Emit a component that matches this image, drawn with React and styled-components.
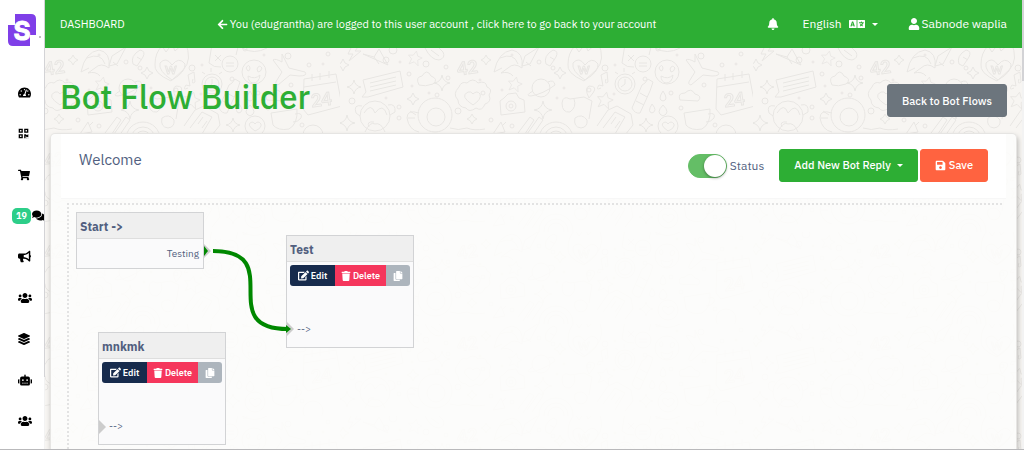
import React, { useState } from "react";
import styled, { createGlobalStyle } from "styled-components";
import {
  FaArrowLeft,
  FaBell,
  FaBullhorn,
  FaComments,
  FaCopy,
  FaEdit,
  FaLanguage,
  FaLayerGroup,
  FaQrcode,
  FaRobot,
  FaSave,
  FaShoppingCart,
  FaTachometerAlt,
  FaTrash,
  FaUser,
  FaUsers,
} from "react-icons/fa";

// ---------------------- wallpaper ----------------------

const star = (x, y, r) =>
  `<path d="M0 -9L3 -3L9 -2L4 2L6 9L0 5L-6 9L-4 2L-9 -2L-3 -3Z" transform="translate(${x} ${y}) rotate(12) scale(${r / 9})"/>`;
const spark = (x, y, r) =>
  `<path d="M${x} ${y - r}Q${x + 1} ${y - 1} ${x + r} ${y}Q${x + 1} ${y + 1} ${x} ${y + r}Q${x - 1} ${y + 1} ${x - r} ${y}Q${x - 1} ${y - 1} ${x} ${y - r}Z"/>`;
const ring = (x, y, r) => `<circle cx="${x}" cy="${y}" r="${r}"/>`;

const doodles = [
  `<path d="M11 0l-3 6h5l-4 7 12-10h-6l3-4"/>`,
  `<path d="M23 6l25 11-9-16-5 8zM34 9l5 7"/>`,
  star(75, 10, 7),
  `<path d="M85 0q6 12 14 12q7-2 4-8l-6-6M91 2l8 6"/>`,
  `<text x="117" y="26" font-size="18" font-family="Lato" font-weight="700" transform="rotate(-8 128 20)">42</text>`,
  spark(146, 12, 5),
  `<path d="M154 24q4-20 18-22q12 2 10 18q-8-6-14 0l-7 5q8-2 12 3M160 10q14-6 18 6M154 24l8-4"/>`,
  `<path d="M182 18l3-10 14-9-9 17zM186 14l5 4"/>`,
  `<path d="M206 16q-3-8 7-14q6 1 3 7l-6 9zM210 9l5 3"/>`,
  spark(220, 25, 6),
  `<path d="M228 16q0-11 7-18l4 6 6-8 3 7 10-9q8 18-2 28l-12 11q-18-8-16-17zM245 17q-6-9-12-2q-2 8 12 17q14-8 13-16q-6-8-13 1"/>`,
  `<text x="238" y="26" font-size="11" font-family="Lato" font-weight="700">W</text>`,
  `<path d="M285-4l-3 19q5 5 12 4M286-3l26-2l-3 12M288 7l6 6m0-6l-6 6"/>`,
  ring(303, 16, 8),
  `<path d="M299 15h8m-8 3h8"/>`,
  `<path d="M315 0q12 7 25 0"/>`,
  ring(327, 24, 12),
  `<path d="M319 20q3-5 4 0q0 3-2 3zM330 21q2-5 5-1q-1 4-4 4zM321 28q7 4 12-1q-1 8-7 8q-5-1-5-7z"/>`,
  `<path d="M355 6l7 14 16 4q3 4-6 4l-9-1-12 10q-4-1-1-5l5-8-9-12q2-2 9 2z"/>`,
  `<path d="M23 32l37-9 3 16-35 10-6 0 4-5zM30 35l26-6m-26 10l26-6m-26 10l26-6"/>`,
  `<path d="M79 37q-4-8 3-9q5-8 9 0q8 3 2 8q-8 3-14 1z"/>`,
  spark(14, 39, 7), spark(102, 35, 8), spark(73, 51, 6), spark(3, 17, 6),
  `<path d="M119 39q2-6 8-4q6-6 11 0q8-3 9 4q6 2 2 8q3 7-4 9q-3 8-9 4q-7 5-10 0q-8-1-8-8q-6-6 1-13z"/>`,
  `<path d="M133 57q-14-9-5-13q3-1 5 2q4-4 7 0q2 5-7 11z"/>`,
  star(175, 36, 7),
  ring(201, 40, 9),
  `<path d="M193 43q-9 5-2 5q12-2 24-11q-1-6-7-3"/>`,
  `<path d="M261 40q-6 3-2-3l4 1-2-11 6-3 1 10q-4 3-2-3"/>`,
  `<path d="M160 53l4-3 4-4 8-1 3 5 5 2 1 12-24 3z"/>`,
  ring(171, 58, 5), ring(171, 58, 2),
  `<path d="M249 50q-5-10 0-12q9 0 4 7z"/>`, ring(249, 42, 2),
  ring(285, 36, 10), ring(285, 36, 7),
  `<path d="M285 31v5l-4 3M278 26l-3-2M292 26l3-2M284 24v-4"/>`,
  `<path d="M292 60l10-23 3-2 3-4 5 3-3 9-10 22q-5 1-8-5zM296 53l8 4m-4-12l7 4"/>`,
  `<path d="M323 43q-6 9 0 10q6-1 0-10zM312 56q-5 8 0 9q6-2 0-9zM323 57q-8 8 0 11q8-3 0-11z"/>`,
  `<path d="M222 55q1-8 8-4l14-2 8 4-3 18M222 55q0 10 8 9q7-5 4-13M235 70q7-5 12 2q1 7-6 8q-8-1-6-10z"/>`,
  star(265, 52, 8),
  spark(203, 62, 9), spark(132, 71, 5), spark(306, 77, 7), spark(7, 75, 8),
  ring(35, 68, 15),
  `<path d="M24 65q7-11 11 0q8-11 12 2M22 58q-9-2-6 7l4 3M48 57q8-2 7 7l-5 3M25 84q5-11 10-8q6-2 10 8M29 79q-3-6 5-5"/>`,
  ring(95, 67, 17), ring(96, 69, 9),
  `<path d="M79 65q-12-4-12 5q2 12 12 14M70 63l6 4m-8 3h7M110 80q8 3 17 0q7 3 18 1"/>`,
  `<path d="M257 78l11-16 9-4 14 8 2 11-8 10M263 80l12-16 10 5-10 17M271 76l5-7m-1 11l5-7"/>`,
  ring(328, 78, 10),
  `<path d="M328 83q-10-7-3-9q2 0 3 2q3-4 6 0q1 4-6 7z"/>`,
  ring(216, 91, 17), ring(216, 91, 12), ring(216, 91, 8),
  `<path d="M178 85l12-16 4 3-11 17M187 86l12-17 4 3-11 16"/>`,
  `<path d="M153 86l8-12 4 10zM162 78l4-4"/>`,
  `<path d="M377 31l32-5 6 32-34 9-5-6zM377 39l32-5M385 33v-7m8 6v-7m9 5v-7"/>`,
  `<text x="384" y="58" font-size="18" font-family="Lato" font-weight="700" transform="rotate(-8 394 52)">24</text>`,
  `<path d="M340 52q-3-7 5-7q6-6 10 1q8 2 3 7zM344 65l26-4q1 15-8 20q-11 2-16-4zM368 66q8-2 6 4q-3 4-8 4"/>`,
  [[53, 2, 4], [46, 12, 3], [60, 14, 1], [86, 16, 3], [106, 19, 2], [69, 26, 2], [140, 32, 1], [108, 30, 2],
    [143, 45, 2], [162, 42, 1], [72, 38, 1], [12, 53, 3], [46, 50, 1], [89, 45, 1], [97, 47, 2], [118, 63, 3],
    [59, 59, 2], [59, 70, 2], [151, 72, 2], [172, 78, 2], [172, 7, 1], [224, 40, 1], [199, 14, 2], [213, 20, 2],
    [265, 20, 3], [275, 17, 1], [305, 31, 2], [274, 46, 1], [217, 50, 1], [361, 8, 3], [382, 17, 2], [396, 16, 1],
    [364, 37, 2], [341, 60, 2], [318, 1, 2], [337, 7, 1], [375, 77, 2], [386, 87, 10], [401, 6, 2], [331, 45, 2]]
    .map(([x, y, r]) => ring(x, y, r))
    .join(""),
].join("");

const wallpaper = `url("data:image/svg+xml,${encodeURIComponent(
  `<svg xmlns="http://www.w3.org/2000/svg" width="413" height="92" fill="none" stroke="#e8e6e3" stroke-width="1">${doodles}</svg>`
)}")`;

// ---------------------- styles ----------------------

const GlobalStyle = createGlobalStyle`
  *, *::before, *::after { box-sizing: border-box; }
  body {
    margin: 0;
    color: #525f7f;
    font-family: "IBM Plex Sans", "Noto Sans", sans-serif;
    font-size: 12px;
    line-height: 18px;
  }
  button { font: inherit; cursor: pointer; }
  a { color: inherit; text-decoration: none; }
  svg { display: block; flex: none; }
`;

const Shell = styled.div`
  display: flex;
  height: 100vh;
  overflow: hidden;
  border-bottom: 1px solid #b9b9bb;
`;

const Sidebar = styled.aside`
  display: flex;
  flex-direction: column;
  flex: none;
  width: 44px;
  background: #fff;
`;

const Logo = styled.a`
  display: flex;
  padding: 13px 0 0 8px;
  margin-bottom: 25px;
`;

const Menu = styled.ul`
  margin: 0;
  padding: 0;
  list-style: none;
`;

const MenuLink = styled.a`
  display: flex;
  align-items: center;
  gap: 1px;
  height: 41px;
  padding-left: ${(props) => (props.$wide ? 12 : 18)}px;
  color: #000;
`;

const Count = styled.span`
  padding: 0 4px;
  border-radius: 5px;
  background: #2dce89;
  color: #fff;
  font-size: 9px;
  font-weight: 700;
  line-height: 16px;
`;

const Track = styled.div`
  flex: none;
  width: ${(props) => props.$size}px;
  background: #f3f3f3;
`;

const Thumb = styled.div`
  height: ${(props) => props.$length}%;
  background: #d3d3d6;
`;

const Main = styled.main`
  display: flex;
  flex-direction: column;
  flex: 1;
  min-width: 0;
  background: #f7f5f2 ${wallpaper} -118px 48px;
`;

const TopBar = styled.header`
  display: flex;
  align-items: center;
  flex: none;
  height: 48px;
  padding: 0 15px;
  background: #2dae34;
  color: #fff;
`;

const TopLink = styled.a`
  display: flex;
  align-items: center;
  gap: 2px;
  font-size: ${(props) => (props.$small ? 11 : 12)}px;
  white-space: nowrap;
`;

const Notice = styled(TopLink)`
  margin-left: 92px;
`;

const TopActions = styled.nav`
  display: flex;
  align-items: center;
  gap: 24px;
  margin-left: auto;
`;

const TopButton = styled.button`
  display: flex;
  align-items: center;
  gap: 7px;
  padding: 0;
  border: 0;
  background: none;
  color: inherit;
`;

const LanguageButton = styled(TopButton)`
  padding-right: 6px;
`;

const Caret = styled.span`
  border: 3px solid transparent;
  border-top-color: currentColor;
  border-bottom: 0;
`;

const PageHead = styled.div`
  display: flex;
  align-items: center;
  justify-content: space-between;
  flex: none;
  height: 85px;
  padding: 12px 15px 0;
`;

const Title = styled.h1`
  margin: 0;
  color: #2dae34;
  font-size: 33px;
  font-weight: 500;
  line-height: 44px;
`;

const Button = styled.button`
  display: flex;
  align-items: center;
  gap: ${(props) => props.$gap || 3}px;
  height: 33px;
  padding: 0 14px;
  border: 1px solid ${(props) => props.$color};
  border-radius: 3px;
  background: ${(props) => props.$color};
  color: #fff;
  font-size: 11px;
  font-weight: 500;
  white-space: nowrap;
`;

const BackLink = styled(Button)`
  margin-top: 8px;
`;

const Card = styled.section`
  display: flex;
  flex-direction: column;
  flex: 1;
  margin: 0 5px;
  border: 1px solid #e6e5e3;
  border-bottom: 0;
  border-radius: 5px 5px 0 0;
  background: rgba(253, 253, 252, 0.88);
  box-shadow: 1px 3px 5px rgba(0, 0, 0, 0.25);
`;

const CardHead = styled.div`
  display: flex;
  align-items: center;
  height: 65px;
  margin: 0 10px;
  padding: 0 18px;
  border-bottom: 1px solid #f7f7f7;
  background: #fff;
`;

const BotName = styled.h2`
  flex: 1;
  margin: 0;
  padding-bottom: 12px;
  font-size: 15px;
  font-weight: 400;
`;

const StatusLabel = styled.label`
  display: flex;
  align-items: center;
  gap: 3px;
  margin-right: 15px;
  cursor: pointer;
`;

const Switch = styled.input`
  display: flex;
  appearance: none;
  width: 39px;
  height: 24px;
  margin: 0;
  border: 1px solid #64be66;
  border-radius: 12px;
  background: ${(props) => (props.checked ? "#64be66" : "#ddd")};
  cursor: pointer;

  &::before {
    content: "";
    width: 22px;
    height: 22px;
    margin-left: ${(props) => (props.checked ? "auto" : 0)};
    border-radius: 50%;
    background: #fff;
    box-shadow: 0 1px 3px rgba(0, 0, 0, 0.4);
  }
`;

const Actions = styled.div`
  display: flex;
  gap: 2px;
  margin-bottom: 2px;
`;

// the canvas is a free surface, nodes are dropped on it by coordinates
const Canvas = styled.div`
  position: relative;
  flex: 1;
  margin: 4px 14px 0 16px;
  border-top: 2px dotted #e3e3e3;
  border-left: 2px dotted #e3e3e3;
  overflow: hidden;
`;

const Links = styled.svg`
  position: absolute;
  inset: 0;
  width: 100%;
  height: 100%;
  pointer-events: none;
`;

const NodeBox = styled.article`
  position: absolute;
  left: ${(props) => props.$x}px;
  top: ${(props) => props.$y}px;
  width: 128px;
  border: 1px solid #d2d3d5;
  background: #fafafb;
`;

const NodeTitle = styled.h3`
  margin: 0;
  padding: 5px 3px 2px;
  border-bottom: 1px solid #dedede;
  background: #efefef;
  font-size: 12px;
  font-weight: 700;
  line-height: 18px;
`;

const NodeTools = styled.div`
  display: flex;
  margin: 3px 3px 0;
  border-radius: 3px;
  overflow: hidden;
`;

const ToolButton = styled.button`
  display: flex;
  align-items: center;
  justify-content: center;
  gap: 2px;
  flex: ${(props) => props.$grow} 0 0;
  height: 21px;
  padding: 0;
  border: 0;
  background: ${(props) => props.$color};
  color: #fff;
  font-size: 9px;
  font-weight: 600;
`;

const Port = styled.div`
  padding: ${(props) => (props.$out ? "6px 4px 5px" : "34px 10px 9px")};
  text-align: ${(props) => (props.$out ? "right" : "left")};
  font-size: 10px;
`;

// ---------------------- data ----------------------

const menu = [
  { label: "Dashboard", icon: FaTachometerAlt, size: 13 },
  { label: "QR code", icon: FaQrcode, size: 11 },
  { label: "Store", icon: FaShoppingCart, size: 12 },
  { label: "Chat", icon: FaComments, size: 13, count: 19 },
  { label: "Campaigns", icon: FaBullhorn, size: 13 },
  { label: "Contacts", icon: FaUsers, size: 14 },
  { label: "Templates", icon: FaLayerGroup, size: 12 },
  { label: "Bots", icon: FaRobot, size: 14 },
  { label: "Agents", icon: FaUsers, size: 14 },
];

const nodes = [
  { id: "start", title: "Start ->", x: 7, y: 7, out: "Testing" },
  { id: "test", title: "Test", x: 217, y: 30 },
  { id: "mnkmk", title: "mnkmk", x: 29, y: 127 },
];

// ---------------------- components ----------------------

function Brand() {
  return (
    <svg width="34" height="34" viewBox="0 0 34 34">
      <path d="M7 1h16q5 0 5 5v16H7zM0 12h22v21H5q-5 0-5-5z" fill="#7f3fe8" />
      <text
        x="14"
        y="27"
        fill="#fff"
        stroke="#fff"
        strokeWidth="1"
        fontFamily="Inter, sans-serif"
        fontWeight="700"
        fontSize="26"
        textAnchor="middle"
      >
        S
      </text>
      <circle cx="32" cy="24" r="1" fill="#aaa" />
    </svg>
  );
}

function Node({ node }) {
  return (
    <NodeBox $x={node.x} $y={node.y}>
      <NodeTitle>{node.title}</NodeTitle>
      {node.out ? (
        <Port $out>{node.out}</Port>
      ) : (
        <>
          <NodeTools>
            <ToolButton $color="#172b4d" $grow={45}>
              <FaEdit size={11} /> Edit
            </ToolButton>
            <ToolButton $color="#f5365c" $grow={51}>
              <FaTrash size={10} /> Delete
            </ToolButton>
            <ToolButton $color="#adb5bd" $grow={24} aria-label="Copy">
              <FaCopy size={10} />
            </ToolButton>
          </NodeTools>
          <Port>{"-->"}</Port>
        </>
      )}
    </NodeBox>
  );
}

const App = () => {
  const [active, setActive] = useState(true);

  return (
    <Shell>
      <GlobalStyle />
      <Sidebar>
        <Logo href="#" aria-label="Home">
          <Brand />
        </Logo>
        <Menu>
          {menu.map(({ label, icon: Icon, size, count }) => (
            <li key={label}>
              <MenuLink href="#" aria-label={label} $wide={Boolean(count)}>
                {count && <Count>{count}</Count>}
                <Icon size={size} />
              </MenuLink>
            </li>
          ))}
        </Menu>
      </Sidebar>
      <Track $size={1}>
        <Thumb $length={84} />
      </Track>

      <Main>
        <TopBar>
          <TopLink href="#" $small>
            DASHBOARD
          </TopLink>
          <Notice href="#" $small>
            <FaArrowLeft size={11} />
            You (edugrantha) are logged to this user account , click here to go
            back to your account
          </Notice>
          <TopActions>
            <TopButton aria-label="Notifications">
              <FaBell size={12} />
            </TopButton>
            <LanguageButton>
              English
              <FaLanguage size={16} />
              <Caret />
            </LanguageButton>
            <TopLink href="#">
              <FaUser size={12} />
              Sabnode waplia
            </TopLink>
          </TopActions>
        </TopBar>

        <PageHead>
          <Title>Bot Flow Builder</Title>
          <BackLink as="a" href="#" $color="#6c757d">
            Back to Bot Flows
          </BackLink>
        </PageHead>

        <Card>
          <CardHead>
            <BotName>Welcome</BotName>
            <StatusLabel>
              <Switch
                type="checkbox"
                checked={active}
                onChange={(e) => setActive(e.target.checked)}
              />
              Status
            </StatusLabel>
            <Actions>
              <Button $color="#2dae34" $gap={6}>
                Add New Bot Reply <Caret />
              </Button>
              <Button $color="#ff6340">
                <FaSave size={11} /> Save
              </Button>
            </Actions>
          </CardHead>

          <Canvas>
            {nodes.map((node) => (
              <Node key={node.id} node={node} />
            ))}
            <Links>
              <path d="M135 39l7 7-7 7z" fill="#ccc" />
              <path d="M135 41l4 5-4 5z" fill="#080" />
              <path d="M218 117l7 7-7 7z" fill="#ccc" />
              <path d="M30 215l7 7-7 7z" fill="#ccc" />
              <path
                d="M144 46C219 46 144 124 219 124"
                fill="none"
                stroke="#080"
                strokeWidth="4"
              />
              <path d="M217 120l5 4-5 4z" fill="#080" />
            </Links>
          </Canvas>
        </Card>
      </Main>
      <Track $size={2}>
        <Thumb $length={18} />
      </Track>
    </Shell>
  );
};

export default App;
